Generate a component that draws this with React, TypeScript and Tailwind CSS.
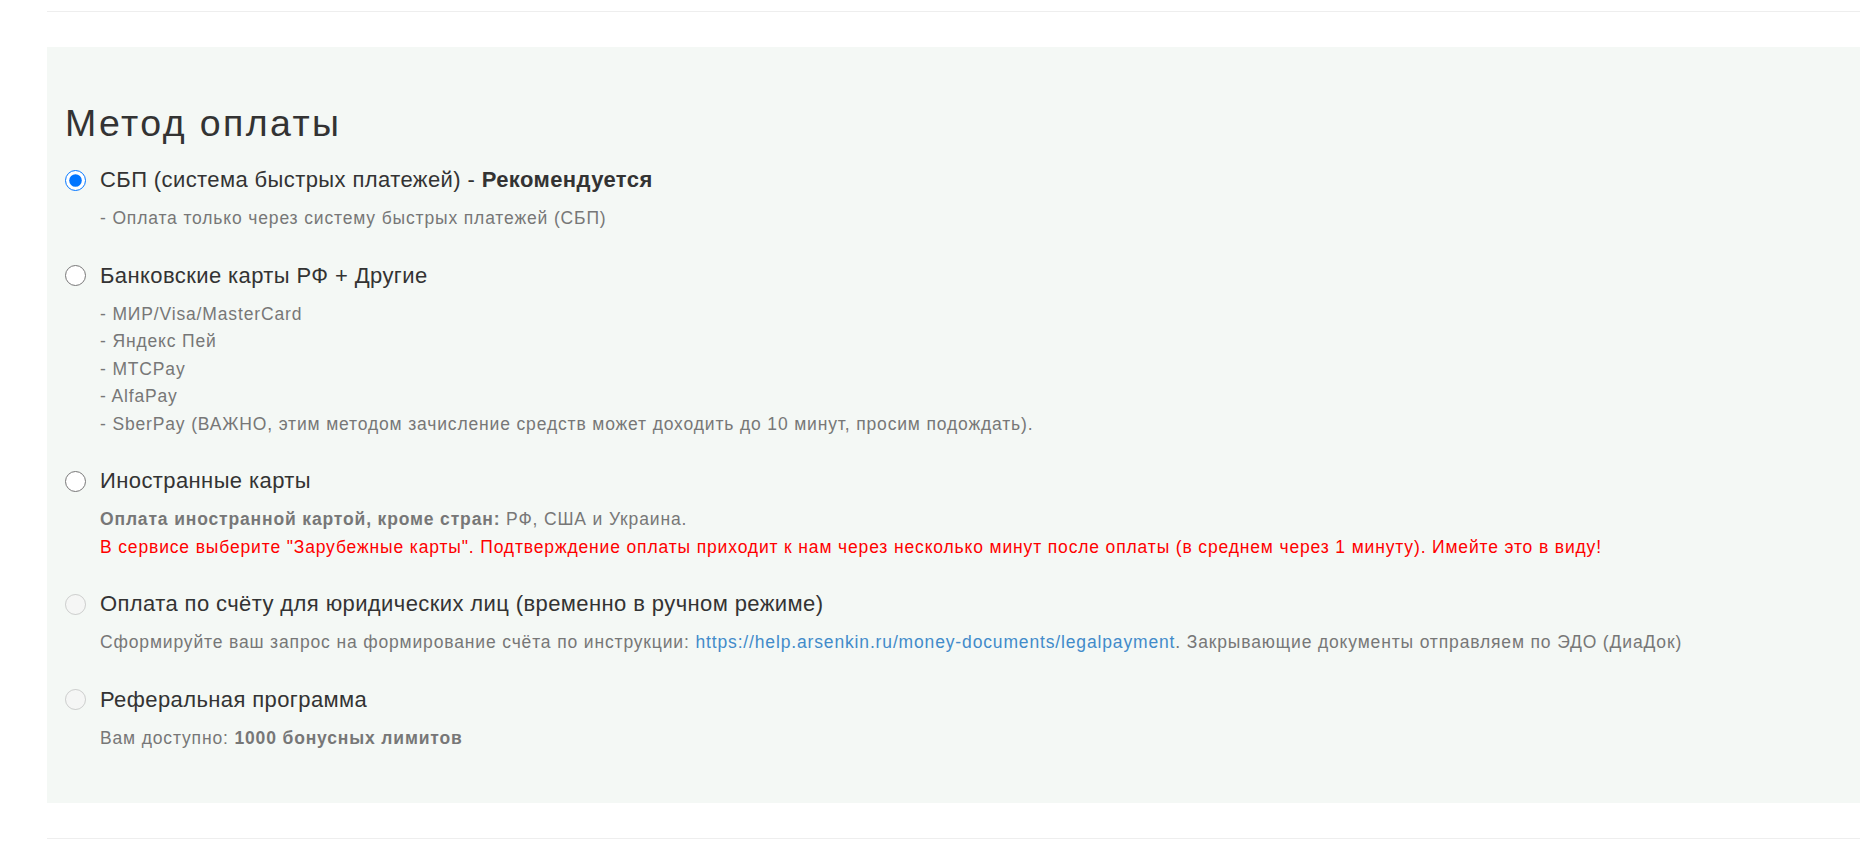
import React from 'react';

type Option = {
  id: string;
  label: React.ReactNode;
  checked?: boolean;
  disabled?: boolean;
  body: React.ReactNode;
};

const options: Option[] = [
  {
    id: 'sbp',
    checked: true,
    label: (
      <>
        СБП (система быстрых платежей) - <b className="font-bold">Рекомендуется</b>
      </>
    ),
    body: <p>- Оплата только через систему быстрых платежей (СБП)</p>,
  },
  {
    id: 'cards',
    label: 'Банковские карты РФ + Другие',
    body: (
      <>
        <p>- МИР/Visa/MasterCard</p>
        <p>- Яндекс Пей</p>
        <p>- MTCPay</p>
        <p>- AlfaPay</p>
        <p>- SberPay (ВАЖНО, этим методом зачисление средств может доходить до 10 минут, просим подождать).</p>
      </>
    ),
  },
  {
    id: 'foreign',
    label: 'Иностранные карты',
    body: (
      <>
        <p>
          <b className="font-bold">Оплата иностранной картой, кроме стран:</b> РФ, США и Украина.
        </p>
        <p className="text-[#ff0000]">
          В сервисе выберите "Зарубежные карты". Подтверждение оплаты приходит к нам через несколько минут после оплаты (в среднем через 1 минуту). Имейте это в виду!
        </p>
      </>
    ),
  },
  {
    id: 'legal',
    disabled: true,
    label: 'Оплата по счёту для юридических лиц (временно в ручном режиме)',
    body: (
      <p>
        Сформируйте ваш запрос на формирование счёта по инструкции:{' '}
        <a href="#" className="text-[#428bca]">
          https://help.arsenkin.ru/money-documents/legalpayment
        </a>
        . Закрывающие документы отправляем по ЭДО (ДиаДок)
      </p>
    ),
  },
  {
    id: 'referral',
    disabled: true,
    label: 'Реферальная программа',
    body: (
      <p>
        Вам доступно: <b className="font-bold">1000 бонусных лимитов</b>
      </p>
    ),
  },
];

const App: React.FC = () => {
  return (
    <div className="min-h-screen bg-white font-['Liberation_Sans',Arial,sans-serif] text-[#333]">
      <div className="pl-[47px] pt-[11px]">
        <hr className="border-0 border-t border-[#eee]" />

        <section className="mt-[35px] bg-[#f4f8f5] pl-[18px] pt-[56px] pb-[51px]">
          <h2 className="text-[37.5px] leading-[1.1] font-normal tracking-[2.4px]">Метод оплаты</h2>

          <div className="mt-[21px] flex flex-col gap-[28px]">
            {options.map((o) => (
              <div key={o.id}>
                <label className="flex items-center gap-[14px] h-[30px]">
                  <input
                    type="radio"
                    name="payment"
                    defaultChecked={o.checked}
                    disabled={o.disabled}
                    className="m-0 w-[21px] h-[21px] shrink-0"
                  />
                  <span className="text-[22px] leading-[30px] tracking-[0.4px]">{o.label}</span>
                </label>
                <div className="mt-[10px] pl-[35px] text-[17.5px] leading-[27.5px] tracking-[0.85px] text-[#777]">
                  {o.body}
                </div>
              </div>
            ))}
          </div>
        </section>

        <hr className="mt-[35px] border-0 border-t border-[#eee]" />
      </div>
    </div>
  );
};

export default App;
